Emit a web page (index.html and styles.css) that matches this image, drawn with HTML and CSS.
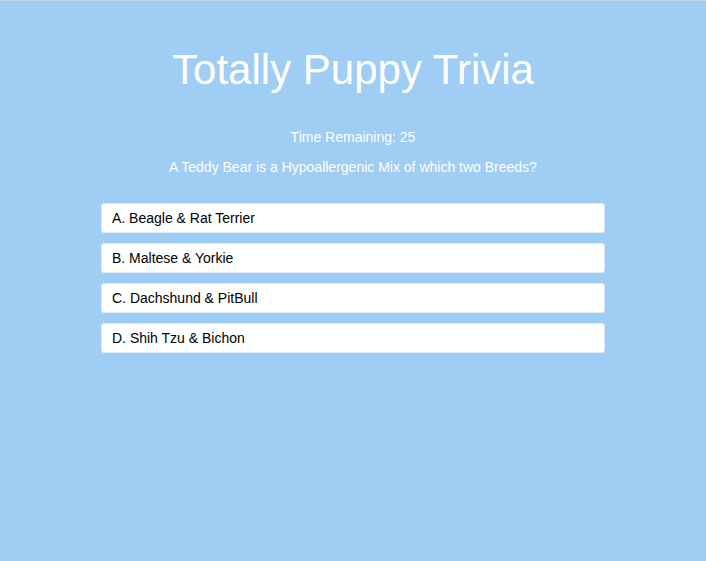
FILE: index.html
```html
<!DOCTYPE html>
<html>
<head>
<meta charset="utf-8">
<link rel="stylesheet" href="styles.css">
</head>
<body>
<div class="topline"></div>
<main class="quiz">
  <h1 class="title">Totally Puppy Trivia</h1>
  <p class="timer">Time Remaining: 25</p>
  <p class="question">A Teddy Bear is a Hypoallergenic Mix of which two Breeds?</p>
  <div class="answers">
    <button class="answer">A. Beagle &amp; Rat Terrier</button>
    <button class="answer">B. Maltese &amp; Yorkie</button>
    <button class="answer">C. Dachshund &amp; PitBull</button>
    <button class="answer">D. Shih Tzu &amp; Bichon</button>
  </div>
</main>
</body>
</html>
```
FILE: styles.css
```css
html, body {
  margin: 0;
  padding: 0;
  height: 100%;
}
body {
  background: #9fcdf3;
  font-family: "Liberation Sans", Arial, sans-serif;
  color: #fff;
}
.topline {
  height: 1px;
  background: #c9d3dc;
}
.quiz {
  width: 504px;
  margin: 0 auto;
  text-align: center;
  padding-top: 44px;
}
.title {
  margin: 0;
  font-size: 42px;
  font-weight: normal;
  line-height: 50px;
}
.timer {
  margin: 33px 0 0;
  font-size: 14px;
  line-height: 18px;
}
.question {
  margin: 12px 0 0;
  font-size: 14px;
  line-height: 18px;
}
.answers {
  margin-top: 27px;
  display: flex;
  flex-direction: column;
  gap: 10px;
}
.answer {
  display: block;
  width: 100%;
  height: 30px;
  padding: 0 10px;
  text-align: left;
  background: #fff;
  border: 1px solid #d8ecfb;
  border-radius: 3px;
  font-family: "Liberation Sans", Arial, sans-serif;
  font-size: 14px;
  color: #000;
}
```
